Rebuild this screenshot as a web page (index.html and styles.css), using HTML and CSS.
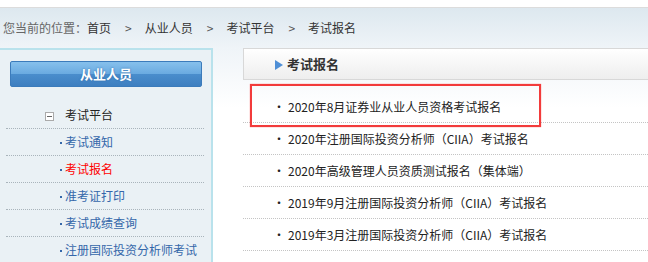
FILE: index.html
```html
<!DOCTYPE html>
<html lang="zh-CN">
<head>
  <meta charset="UTF-8">
  <title>考试报名</title>
  <link rel="stylesheet" href="styles.css">
</head>
<body>
  <div class="top-line"></div>
  <div class="crumb">
    <span class="crumb-label">您当前的位置：</span><a href="#">首页</a><span class="sep">&gt;</span><a href="#">从业人员</a><span class="sep">&gt;</span><a href="#">考试平台</a><span class="sep">&gt;</span><span class="crumb-cur">考试报名</span>
  </div>

  <div class="main">
    <div class="sidebar">
      <div class="side-btn">从业人员</div>
      <ul class="side-menu">
        <li class="side-group"><span class="minus"></span>考试平台</li>
        <li><a href="#">考试通知</a></li>
        <li><a href="#" class="active">考试报名</a></li>
        <li><a href="#">准考证打印</a></li>
        <li><a href="#">考试成绩查询</a></li>
        <li><a href="#">注册国际投资分析师考试</a></li>
      </ul>
    </div>

    <div class="content">
      <div class="panel-head"><span class="arrow"></span>考试报名</div>
      <ul class="news-list">
        <li><span class="dot">·</span>2020年8月证券业从业人员资格考试报名</li>
        <li><span class="dot">·</span>2020年注册国际投资分析师（CIIA）考试报名</li>
        <li><span class="dot">·</span>2020年高级管理人员资质测试报名（集体端）</li>
        <li><span class="dot">·</span>2019年9月注册国际投资分析师（CIIA）考试报名</li>
        <li><span class="dot">·</span>2019年3月注册国际投资分析师（CIIA）考试报名</li>
      </ul>
      <div class="mark"></div>
    </div>
  </div>
</body>
</html>
```

FILE: styles.css
```css
body {
  margin: 0;
  font-family: "Noto Sans CJK SC", "DejaVu Sans", sans-serif;
  font-size: 12px;
  color: #333;
  background-color: #fff;
}
a {
  text-decoration: none;
}
ul {
  list-style: none;
  margin: 0;
  padding: 0;
}
.top-line {
  height: 7px;
  border-bottom: 1px solid #dcdcdc;
}
.crumb {
  height: 40px;
  line-height: 40px;
  padding-left: 3px;
  background: linear-gradient(to bottom, #dde8ef, #eff4f8);
  white-space: nowrap;
}
.crumb-label {
  color: #666;
}
.crumb a, .crumb-cur {
  color: #333;
}
.crumb .sep {
  color: #555;
  margin: 0 13px 0 14px;
}
.main {
  display: flex;
  gap: 30px;
  height: 214px;
  background: linear-gradient(to bottom, #eff4f8, #fff 60px);
}
.sidebar {
  flex: 0 0 211px;
  background-color: #eaf1f5;
  border-top: 2px solid #b9e2ec;
  border-right: 2px solid #b9e2ec;
  padding-top: 11px;
}
.side-btn {
  margin: 0 9px 0 10px;
  height: 24px;
  line-height: 24px;
  text-align: center;
  color: #fff;
  font-size: 13px;
  font-weight: bold;
  text-shadow: 0 0 2px #2d6aa8;
  background: linear-gradient(to bottom, #86c0ec, #6aaae0 50%, #4a8dcc 51%, #3e7fc0);
  border: 1px solid #3b7bbb;
  border-radius: 2px;
}
.side-menu {
  margin: 15px 7px 0 6px;
}
.side-menu li {
  height: 26px;
  line-height: 26px;
  border-bottom: 1px dotted #a9b4bb;
  padding-left: 54px;
}
.side-menu .side-group {
  padding-left: 39px;
  color: #222;
}
.minus {
  display: inline-block;
  width: 7px;
  height: 7px;
  border: 1px solid #aaa;
  background: linear-gradient(#666, #666) center / 5px 1px no-repeat, #fff;
  margin-right: 11px;
  vertical-align: -1px;
}
.side-menu a {
  color: #3467aa;
}
.side-menu a::before {
  content: "";
  display: inline-block;
  width: 2px;
  height: 2px;
  background-color: #3467aa;
  margin-right: 3px;
  vertical-align: 3px;
}
.side-menu a.active {
  color: #f00;
}
.content {
  flex: 1;
  position: relative;
}
.panel-head {
  height: 30px;
  line-height: 30px;
  padding-left: 31px;
  border: 1px solid #d8d8d8;
  border-right: none;
  background: linear-gradient(to bottom, #fff, #eeeeee);
  font-weight: bold;
  font-size: 13px;
  color: #333;
}
.arrow {
  display: inline-block;
  width: 0;
  height: 0;
  border-top: 5px solid transparent;
  border-bottom: 5px solid transparent;
  border-left: 8px solid #4f8fd6;
  margin-right: 4px;
  vertical-align: -1px;
}
.news-list {
  margin-top: 11px;
}
.news-list li {
  height: 31px;
  line-height: 31px;
  border-bottom: 1px dotted #c4c4c4;
  padding-left: 30px;
  color: #222;
  white-space: nowrap;
}
.dot {
  display: inline-block;
  width: 15px;
}
.mark {
  position: absolute;
  left: 7px;
  top: 36px;
  width: 287px;
  height: 39px;
  border: 2px solid #f23b3b;
  box-shadow: 0 0 1px #f66;
}
```
